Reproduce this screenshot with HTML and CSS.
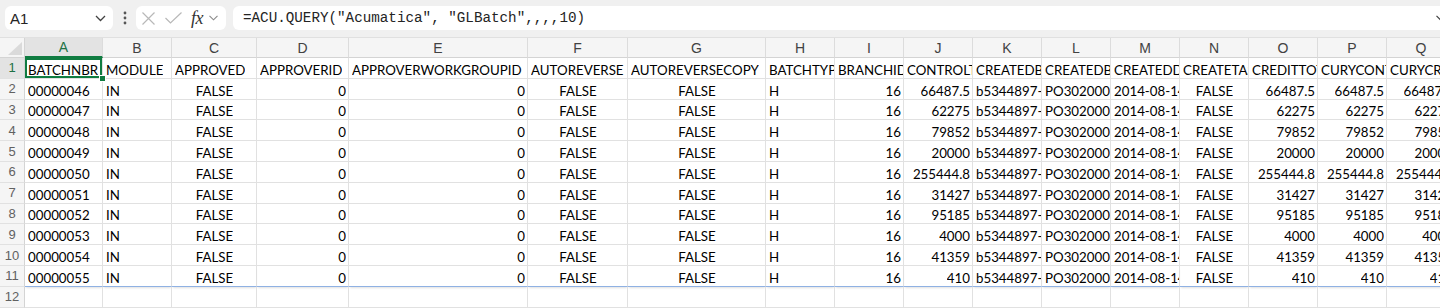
FILE: index.html
```html
<!DOCTYPE html>
<html lang="en">
<head>
    <meta charset="UTF-8">
    <meta name="viewport" content="width=device-width, initial-scale=1.0">
    <title>GLBatch - Excel</title>
    <link rel="stylesheet" href="styles.css">
</head>
<body>
<div class="toolbar">
    <div class="namebox">
        <span>A1</span>
        <svg class="chev" width="11" height="7" viewBox="0 0 11 7"><path d="M1 1 L5.5 5.5 L10 1" fill="none" stroke="#424242" stroke-width="1.3"/></svg>
    </div>
    <div class="kebab">
        <svg width="4" height="14" viewBox="0 0 4 14"><circle cx="2" cy="2" r="1.4" fill="#555"/><circle cx="2" cy="7" r="1.4" fill="#555"/><circle cx="2" cy="12" r="1.4" fill="#555"/></svg>
    </div>
    <div class="fx-group">
        <svg class="cancel" width="13" height="13" viewBox="0 0 13 13"><path d="M0.5 0.5 L12.5 12.5 M12.5 0.5 L0.5 12.5" stroke="#b8b8b8" stroke-width="1.2"/></svg>
        <svg class="enter" width="17" height="12" viewBox="0 0 17 12"><path d="M0.5 6 L5.5 11 L16.5 0.5" fill="none" stroke="#b8b8b8" stroke-width="1.2"/></svg>
        <span class="fx">fx</span>
        <svg class="chev-sm" width="9" height="6" viewBox="0 0 9 6"><path d="M0.5 0.8 L4.5 4.8 L8.5 0.8" fill="none" stroke="#8a8a8a" stroke-width="1.1"/></svg>
    </div>
    <div class="formula">
        <span>=ACU.QUERY("Acumatica", "GLBatch",,,,10)</span>
        <svg class="chev-sm" width="9" height="6" viewBox="0 0 9 6"><path d="M0.5 0.8 L4.5 4.8 L8.5 0.8" fill="none" stroke="#424242" stroke-width="1.2"/></svg>
    </div>
</div>

<!-- Sheet grid, cells are filled in below -->
<div class="sheet" id="sheet"></div>

<script>
    const sheet = document.getElementById("sheet");
    const letters = "ABCDEFGHIJKLMNOPQ".split("");
    const fields = ["BATCHNBR", "MODULE", "APPROVED", "APPROVERID", "APPROVERWORKGROUPID", "AUTOREVERSE",
        "AUTOREVERSECOPY", "BATCHTYPE", "BRANCHID", "CONTROLTOTAL", "CREATEDBYID", "CREATEDBYSCREENID",
        "CREATEDDATETIME", "CREATETASK", "CREDITTOTAL", "CURYCONTROLTOTAL", "CURYCREDITTOTAL"];
    const align = ["l", "l", "c", "r", "r", "c", "c", "l", "r", "r", "l", "l", "l", "c", "r", "r", "r"];
    const totals = ["66487.5", "62275", "79852", "20000", "255444.8", "31427", "95185", "4000", "41359", "410"];

    function addCell(cls, text) {
        const div = document.createElement("div");
        div.className = cls;
        if (text !== undefined) {
            const span = document.createElement("span");
            span.textContent = text;
            div.appendChild(span);
        }
        sheet.appendChild(div);
        return div;
    }

    // column letters
    addCell("corner");
    letters.forEach((l, i) => addCell(i === 0 ? "colhead active" : "colhead", l));

    // field names
    addCell("rowhead active", "1");
    fields.forEach((f, i) => addCell(i === 0 ? "cell l sel" : "cell l", f));

    // data rows
    totals.forEach((t, r) => {
        const batch = String(46 + r).padStart(8, "0");
        const row = [batch, "IN", "FALSE", "0", "0", "FALSE", "FALSE", "H", "16", t,
            "b5344897-5a7e-4c1f-9d2b-6e0f8a3c1d42", "PO302000", "2014-08-14 10:35:42", "FALSE", t, t, t];
        addCell("rowhead", String(r + 2));
        row.forEach((v, i) => {
            let cls = "cell " + align[i];
            if (r === totals.length - 1) cls += " last";
            addCell(cls, v);
        });
    });

    // empty row 12
    addCell("rowhead", "12");
    letters.forEach(() => addCell("cell"));
</script>
</body>
</html>
```

FILE: styles.css
```css
body {
    margin: 0;
    background: #fff;
    font-family: 'Liberation Sans', Arial, sans-serif;
    color: #000;
    overflow: hidden;
    width: 1440px;
    height: 308px;
}

/* Formula bar */
.toolbar {
    height: 38px;
    background: #f0f0f0;
    border-bottom: 1px solid #e0e0e0;
    display: flex;
    align-items: flex-start;
    padding: 6px 0 0 5px;
    box-sizing: border-box;
    overflow: hidden;
}

.namebox {
    width: 108px;
    height: 24px;
    background: #fff;
    border-radius: 6px;
    display: flex;
    align-items: center;
    justify-content: space-between;
    padding: 0 7px 0 5px;
    box-sizing: border-box;
    font-size: 15px;
    color: #242424;
}

.kebab {
    width: 23px;
    height: 24px;
    display: flex;
    align-items: center;
    justify-content: center;
}

.fx-group {
    width: 90px;
    height: 24px;
    background: #fff;
    border-radius: 6px;
    display: flex;
    align-items: center;
    padding-left: 6px;
    box-sizing: border-box;
}

.fx-group .enter {
    margin-left: 10px;
}

.fx {
    margin-left: 9px;
    font-family: 'Liberation Serif', 'Times New Roman', serif;
    font-style: italic;
    font-size: 18px;
    color: #333;
    letter-spacing: -0.5px;
    line-height: 1;
}

.fx-group .chev-sm {
    margin-left: 6px;
}

.formula {
    flex: 1;
    height: 24px;
    margin-left: 7px;
    margin-right: -12px;
    background: #fff;
    border-radius: 6px;
    display: flex;
    align-items: center;
    justify-content: space-between;
    padding: 0 7px 0 10px;
    font-family: 'Liberation Mono', 'Courier New', monospace;
    font-size: 14.25px;
    color: #242424;
}

/* Sheet grid: row header + columns A..Q */
.sheet {
    display: grid;
    grid-template-columns: 25px 78px 69px 85px 92px 179px 100px 138px repeat(10, 69px);
    grid-template-rows: 20px repeat(12, 20.8px);
    width: max-content;
}

.corner {
    background: #f5f5f5;
    border-right: 1px solid #d4d4d4;
    border-bottom: 1px solid #d4d4d4;
    position: relative;
}

.corner::after {
    content: "";
    position: absolute;
    right: 2px;
    bottom: 2px;
    width: 0;
    height: 0;
    border-left: 14px solid transparent;
    border-bottom: 13px solid #dadada;
}

.colhead {
    background: #f5f5f5;
    border-right: 1px solid #dcdcdc;
    border-bottom: 1px solid #d4d4d4;
    display: flex;
    align-items: center;
    justify-content: center;
    font-size: 14px;
    color: #424242;
}

.colhead.active {
    background: #e3e3e3;
    color: #1e7145;
    border-bottom: 2px solid #107c41;
}

.rowhead {
    background: #f5f5f5;
    border-right: 1px solid #d4d4d4;
    border-bottom: 1px solid #e1e1e1;
    display: flex;
    align-items: center;
    justify-content: center;
    font-size: 13px;
    color: #616161;
}

.rowhead.active {
    background: #e3e3e3;
    color: #1e7145;
}

.cell {
    border-right: 1px solid #e1e1e1;
    border-bottom: 1px solid #e1e1e1;
    display: flex;
    align-items: flex-end;
    padding: 0 2px 0 3px;
    overflow: hidden;
    white-space: nowrap;
    font-family: Lato, 'Liberation Sans', sans-serif;
    font-size: 13.3px;
    line-height: 15px;
    min-width: 0;
}

.cell span {
    min-width: 0;
    overflow: hidden;
}

/* left text is clipped right at the grid line, as Excel does */
.cell.l {
    padding-right: 0;
}

.cell.c {
    justify-content: center;
}

.cell.r {
    justify-content: flex-end;
}

.cell.last {
    border-bottom-color: #8fb1e3;
    box-shadow: 0 2px 2px -1px rgba(0, 0, 0, 0.12);
}

/* active cell A1 */
.cell.sel {
    position: relative;
    overflow: visible;
    z-index: 2;
}

.cell.sel::after {
    content: "";
    position: absolute;
    top: 0;
    left: 0;
    right: 0;
    bottom: 0;
    border: 2px solid #107c41;
}

.cell.sel::before {
    content: "";
    position: absolute;
    right: -4px;
    bottom: -4px;
    width: 5px;
    height: 5px;
    background: #107c41;
    border: 1px solid #fff;
    z-index: 3;
}
```
